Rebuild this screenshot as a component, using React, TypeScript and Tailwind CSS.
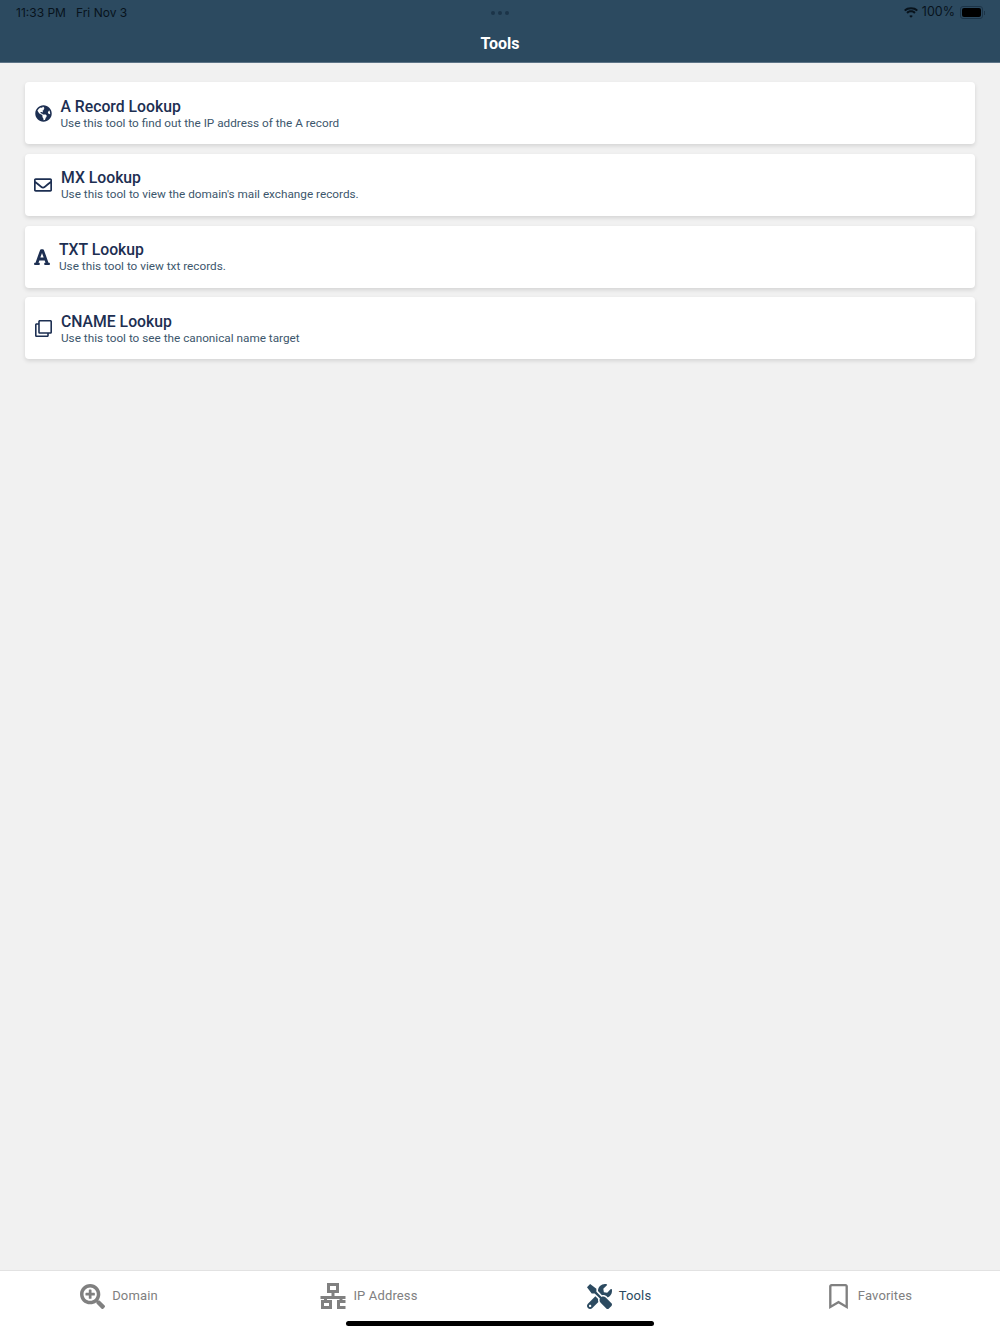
import { FaFont, FaGlobeAmericas, FaRegBookmark, FaRegClone, FaRegEnvelope, FaSearchPlus, FaTools } from "react-icons/fa";
import type { ReactNode } from "react";

const tools = [
  { title: "A Record Lookup", text: "Use this tool to find out the IP address of the A record", icon: <FaGlobeAmericas className="w-[17px] h-[17px]" />, pad: "pl-[9.500px]" },
  { title: "MX Lookup", text: "Use this tool to view the domain's mail exchange records.", icon: <FaRegEnvelope className="w-[18px] h-[18px]" />, pad: "pl-[9px]" },
  { title: "TXT Lookup", text: "Use this tool to view txt records.", icon: <FaFont className="w-[16px] h-[18px]" />, pad: "pl-[9px]" },
  { title: "CNAME Lookup", text: "Use this tool to see the canonical name target", icon: <FaRegClone className="w-[17px] h-[17px]" />, pad: "pl-[10px]" },
];

function NetworkIcon() {
  return (
    <svg viewBox="0 0 26 26" className="w-[26px] h-[26px]" fill="none" stroke="currentColor" strokeWidth="3">
      <rect x="8.500" y="1.500" width="9" height="7" />
      <path d="M13 8v5M0.500 14.500h25M5.500 14v4M21 14v4" />
      <rect x="2.500" y="18.500" width="8" height="6" />
      <path d="M25.500 18.500h-7v6h7" />
    </svg>
  );
}

function Tab({ icon, label, active }: { icon: ReactNode; label: string; active?: boolean }) {
  return (
    <div className={`flex items-center justify-center gap-[7px] pr-[12px] ${active ? "text-[#2c4a60]" : "text-[#808080]"}`}>
      {icon}
      <span className="text-[13px] tracking-[0.15px]">{label}</span>
    </div>
  );
}

export default function App() {
  return (
    <div className="relative flex flex-col h-[1334px] bg-[#f1f1f1] font-['Roboto',sans-serif]">
      <header className="h-[63px] bg-[#2c4a60] border-b border-[#5d7487] shrink-0">
        <div className="flex items-center justify-between h-[24px] pt-[1px] pl-[16px] pr-[15px] text-[#08131c] font-['Inter',sans-serif]">
          <div className="flex gap-[10px] w-[200px] text-[12px]">
            <span>11:33 PM</span>
            <span>Fri Nov 3</span>
          </div>
          <div className="flex gap-[3px] pr-[1px]">
            <span className="w-[4px] h-[4px] rounded-full bg-[#1c3448]" />
            <span className="w-[4px] h-[4px] rounded-full bg-[#1c3448]" />
            <span className="w-[4px] h-[4px] rounded-full bg-[#1c3448]" />
          </div>
          <div className="flex items-center justify-end gap-[4px] w-[200px] text-[12.500px]">
            <svg viewBox="0 0 16 12" className="w-[14px] h-[11px]" fill="#08131c">
              <path d="M8 2.200c2.400 0 4.600.9 6.200 2.500L16 3C13.900.9 11.100 0 8 0S2.100.9 0 3l1.800 1.700C3.400 3.100 5.600 2.200 8 2.200z" />
              <path d="M8 5.800c1.400 0 2.700.5 3.700 1.500l1.600-1.700C11.900 4.200 10 3.500 8 3.500s-3.900.7-5.300 2.100l1.600 1.700c1-1 2.300-1.500 3.700-1.500z" />
              <path d="M8 9.200c-.8 0-1.500.3-2 .8l2 2 2-2c-.5-.5-1.200-.8-2-.8z" />
            </svg>
            <span className="mr-[1px]">100%</span>
            <div className="flex items-center">
              <div className="w-[23px] h-[13px] rounded-[3px] border border-[#1c3448] p-[1px]">
                <div className="w-full h-full rounded-[2px] bg-black" />
              </div>
              <div className="w-[1px] h-[4px] bg-[#1c3448] ml-[1px]" />
            </div>
          </div>
        </div>
        <h1 className="text-center text-white text-[16px] font-bold leading-[38px] pt-[1px]">Tools</h1>
      </header>

      <main className="flex-1 flex flex-col gap-[9.750px] pt-[19px] px-[25px]">
        {tools.map((tool) => (
          <div
            key={tool.title}
            className={`flex items-center gap-[9px] h-[62px] rounded-[4px] bg-white shadow-[0_2px_4px_rgba(0,0,0,0.12)] text-[#1d2f52] ${tool.pad}`}
          >
            {tool.icon}
            <div className="flex flex-col">
              <span className="text-[15.750px] font-medium leading-[19px]">{tool.title}</span>
              <span className="text-[11.750px] leading-[14px] text-[#3c566c]">{tool.text}</span>
            </div>
          </div>
        ))}
      </main>

      <nav className="grid grid-cols-4 h-[64px] shrink-0 bg-white border-t border-[#e2e2e2] pb-[14px] pt-[1px]">
        <Tab icon={<FaSearchPlus className="w-[25px] h-[25px]" />} label="Domain" />
        <Tab icon={<NetworkIcon />} label="IP Address" />
        <Tab icon={<FaTools className="w-[25px] h-[25px]" />} label="Tools" active />
        <Tab icon={<FaRegBookmark className="w-[25px] h-[25px]" />} label="Favorites" />
      </nav>

      <div className="absolute left-[346px] top-[1321px] w-[308px] h-[5px] rounded-full bg-black" />
    </div>
  );
}
